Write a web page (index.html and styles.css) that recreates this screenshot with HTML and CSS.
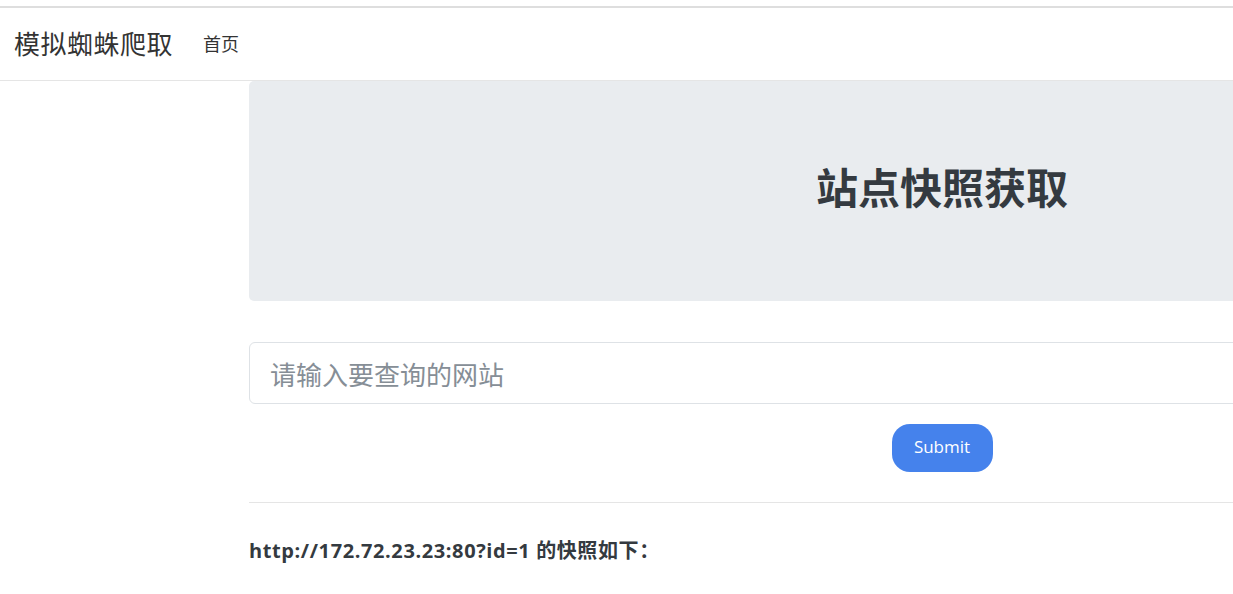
FILE: index.html
```html
<!DOCTYPE html>
<html lang="zh">
<head>
<meta charset="utf-8">
<title>模拟蜘蛛爬取</title>
<link rel="stylesheet" href="styles.css">
</head>
<body>
<div class="topline"></div>
<nav class="navbar">
  <a class="brand" href="#">模拟蜘蛛爬取</a>
  <a class="nav-link" href="#">首页</a>
</nav>
<div class="viewport">
  <main class="content">
    <div class="jumbotron">
      <h1>站点快照获取</h1>
    </div>
    <form class="form">
      <input class="input" type="text" placeholder="请输入要查询的网站">
      <div class="actions">
        <button class="btn" type="button">Submit</button>
      </div>
    </form>
    <hr class="divider">
    <p class="result">http://172.72.23.23:80?id=1 的快照如下：</p>
  </main>
</div>
</body>
</html>
```

FILE: styles.css
```css
html, body {
  margin: 0;
  padding: 0;
  background: #fff;
  overflow-x: hidden;
}
body {
  font-family: "Open Sans", "Noto Sans CJK SC", sans-serif;
  color: #343a40;
}
.topline {
  height: 6px;
  border-bottom: 2px solid #dedede;
}
.navbar {
  height: 72px;
  display: flex;
  align-items: center;
  padding: 0 14px;
  border-bottom: 1px solid #e5e5e5;
}
.brand {
  font-family: "Noto Sans CJK SC", sans-serif;
  font-size: 26px;
  color: #333;
  text-decoration: none;
  margin-right: 30px;
  letter-spacing: 0.5px;
  margin-bottom: 4px;
}
.nav-link {
  font-family: "Noto Sans CJK SC", sans-serif;
  font-size: 18px;
  color: #333;
  text-decoration: none;
  margin-bottom: 3px;
}
.viewport {
  overflow: hidden;
}
.content {
  margin-left: 249px;
  width: 1386px;
}
.jumbotron {
  background: #e9ecef;
  border-radius: 5px;
  height: 220px;
  display: flex;
  align-items: center;
  justify-content: center;
}
.jumbotron h1 {
  margin: 0 0 12px;
  font-family: "Noto Sans CJK SC", sans-serif;
  font-weight: 700;
  font-size: 42px;
  color: #343a40;
}
.form {
  margin-top: 41px;
}
.input {
  display: block;
  box-sizing: border-box;
  width: 100%;
  height: 62px;
  border: 1px solid #dee2e6;
  border-radius: 6px;
  padding: 0 20px;
  font-family: "Noto Sans CJK SC", sans-serif;
  font-size: 26px;
  color: #495057;
  outline: none;
}
.input::placeholder {
  color: #868e96;
}
.actions {
  display: flex;
  justify-content: center;
  margin-top: 20px;
}
.btn {
  width: 101px;
  height: 48px;
  border: none;
  border-radius: 18px;
  background: #4582ec;
  color: #fff;
  font-family: "Open Sans", sans-serif;
  font-size: 17px;
  padding: 0 0 3px;
  cursor: pointer;
}
.divider {
  margin: 30px 0 0;
  border: 0;
  border-top: 1px solid #e5e5e5;
}
.result {
  margin: 32px 0 0;
  font-family: "Open Sans", "Noto Sans CJK SC", sans-serif;
  font-weight: 700;
  font-size: 20px;
  letter-spacing: 0.6px;
  color: #343a40;
}
```
